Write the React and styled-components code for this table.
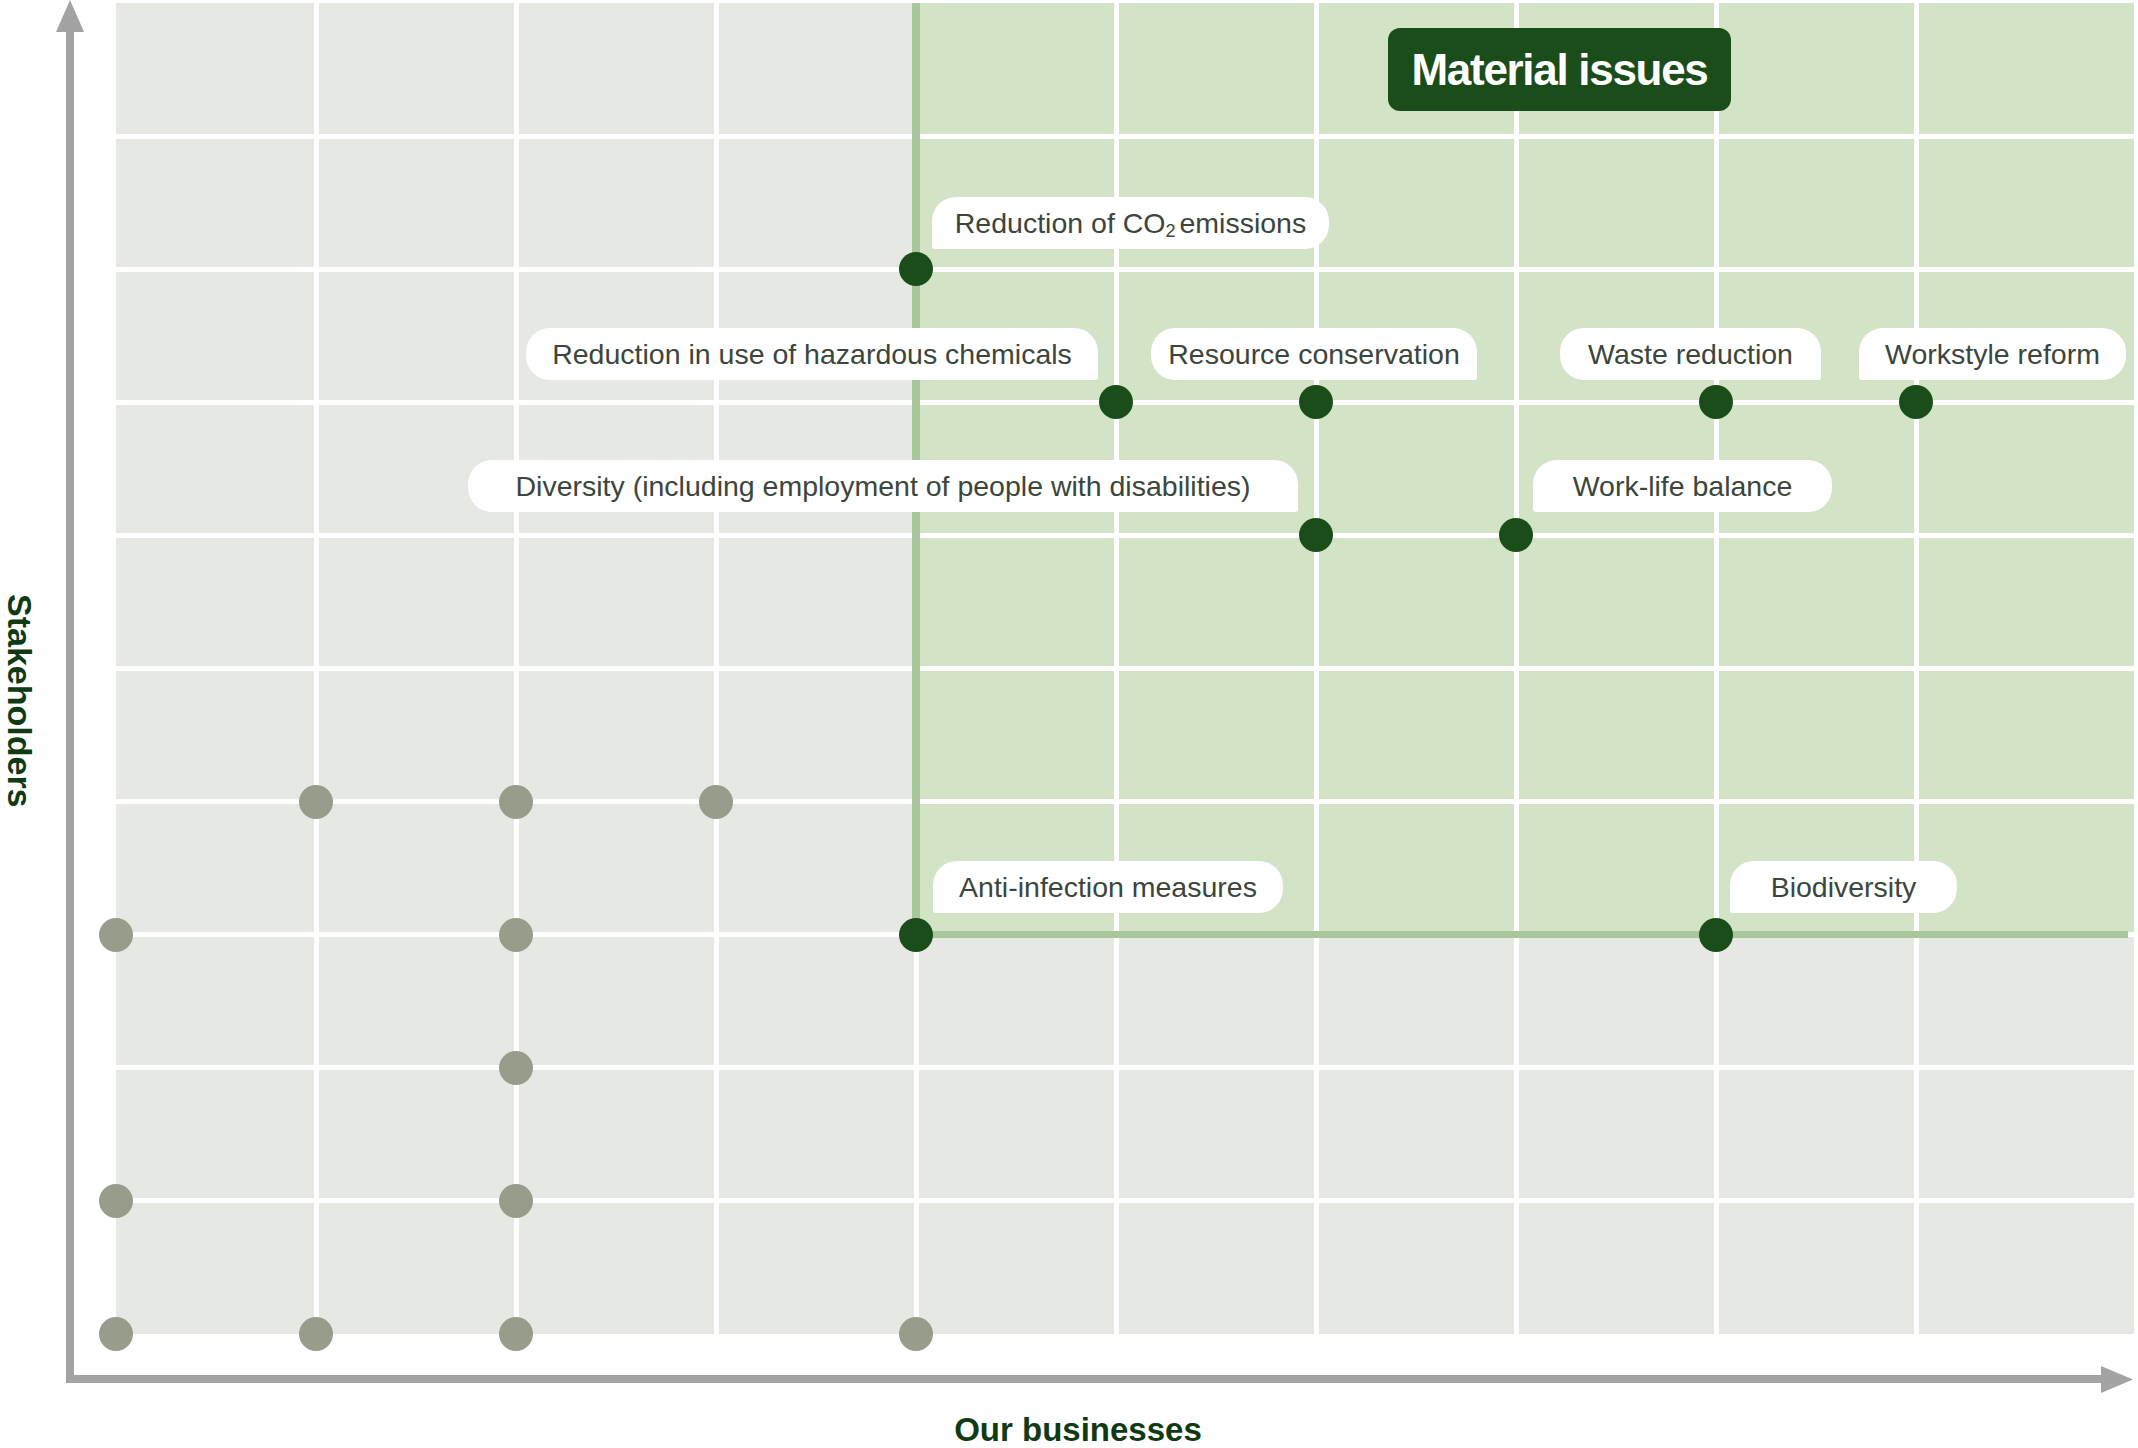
import React from "react";
import styled, { createGlobalStyle } from "styled-components";

const GlobalStyle = createGlobalStyle`
  html, body {
    margin: 0;
    padding: 0;
    background: #ffffff;
    overflow: hidden;
  }
  body {
    font-family: "Liberation Sans", Arial, sans-serif;
  }
`;

const COL = 200;
const ROW = 133.1;

const Page = styled.div`
  width: 2138px;
  height: 1448px;
  display: grid;
  grid-template-columns: 66px 8px 1fr;
  grid-template-rows: 1375px 8px auto;
  overflow: hidden;
`;

const YLabel = styled.div`
  grid-column: 1;
  grid-row: 1;
  align-self: center;
  justify-self: start;
  padding: 27px 0 0 2px;
  writing-mode: vertical-rl;
  font-size: 34px;
  line-height: 36px;
  font-weight: 700;
  color: #0f3a14;
`;

const YAxis = styled.div`
  grid-column: 2;
  grid-row: 1;
  display: flex;
  flex-direction: column;
  align-items: center;
`;

const AxisLine = styled.div`
  flex: 1;
  background: #a3a3a3;
  ${(p) => (p.$vertical ? "width: 8px;" : "height: 8px;")}
`;

const ArrowUp = styled.svg`
  flex: none;
  width: 28px;
  height: 32px;
  margin: 0 -10px;
  display: block;
`;

const ArrowRight = styled.svg`
  flex: none;
  width: 32px;
  height: 27px;
  margin: -9.5px 0;
  display: block;
`;

const XAxis = styled.div`
  grid-column: 2 / 4;
  grid-row: 2;
  display: flex;
  align-items: center;
  padding-right: 5px;
`;

const XLabel = styled.div`
  grid-column: 1 / 4;
  grid-row: 3;
  text-align: center;
  padding-left: 18px;
  margin-top: 27px;
  font-size: 33px;
  line-height: 40px;
  font-weight: 700;
  color: #0f3a14;
`;

const PlotArea = styled.div`
  grid-column: 3;
  grid-row: 1;
  padding: 3px 4px 41px 42px;
`;

const Plot = styled.div`
  position: relative;
  height: 100%;
`;

const CellGrid = styled.div`
  display: grid;
  grid-template-columns: 197.5px repeat(8, 195px) 1fr;
  grid-template-rows: 130.6px repeat(8, 128.1px) 130.6px;
  gap: 5px;
  height: 100%;
`;

const Cell = styled.div`
  background: ${(p) => (p.$material ? "#d2e4c5" : "#e6e8e3")};
`;

const Boundary = styled.div`
  position: absolute;
  background: #a8c79a;
  ${(p) =>
    p.$vertical
      ? `left: ${4 * COL - 4}px; top: 0; width: 8px; height: ${7 * ROW + 3}px;`
      : `left: ${4 * COL}px; top: ${7 * ROW - 3.5}px; height: 7px; width: 1212px;`}
`;

const Dot = styled.div`
  position: absolute;
  width: 34px;
  height: 34px;
  margin: -17px 0 0 -17px;
  border-radius: 50%;
  background: ${(p) => (p.$material ? "#1b4d1a" : "#979d8a")};
`;

const Bubble = styled.div`
  position: absolute;
  height: 52px;
  box-sizing: border-box;
  background: #ffffff;
  border-radius: ${(p) =>
    p.$sharp === "bl" ? "24px 24px 24px 3px" : "24px 24px 3px 24px"};
  font-size: 28.5px;
  line-height: 52px;
  text-align: center;
  white-space: nowrap;
  color: #3b463c;
`;

const Sub = styled.sub`
  font-size: 18px;
  line-height: 0;
  vertical-align: -4px;
  margin-right: 4px;
`;

const Badge = styled.div`
  position: absolute;
  left: 1272px;
  top: 25px;
  width: 343px;
  height: 83px;
  border-radius: 12px;
  background: #1b4d1a;
  color: #ffffff;
  display: flex;
  align-items: center;
  justify-content: center;
  font-size: 44px;
  font-weight: 700;
  letter-spacing: -1.3px;
`;

// [column line, row line, material?]
const dots = [
  [4, 2, true],
  [5, 3, true],
  [6, 3, true],
  [8, 3, true],
  [9, 3, true],
  [6, 4, true],
  [7, 4, true],
  [4, 7, true],
  [8, 7, true],
  [1, 6, false],
  [2, 6, false],
  [3, 6, false],
  [0, 7, false],
  [2, 7, false],
  [2, 8, false],
  [0, 9, false],
  [2, 9, false],
  [0, 10, false],
  [1, 10, false],
  [2, 10, false],
  [4, 10, false],
];

const labels = [
  { text: "co2", left: 816, top: 194, width: 397, sharp: "bl" },
  { text: "Reduction in use of hazardous chemicals", left: 410, top: 325, width: 572, sharp: "br" },
  { text: "Resource conservation", left: 1035, top: 325, width: 326, sharp: "br" },
  { text: "Waste reduction", left: 1444, top: 325, width: 261, sharp: "br" },
  { text: "Workstyle reform", left: 1743, top: 325, width: 267, sharp: "bl" },
  { text: "Diversity (including employment of people with disabilities)", left: 352, top: 457, width: 830, sharp: "br" },
  { text: "Work-life balance", left: 1417, top: 457, width: 299, sharp: "bl" },
  { text: "Anti-infection measures", left: 817, top: 858, width: 350, sharp: "bl" },
  { text: "Biodiversity", left: 1614, top: 858, width: 227, sharp: "bl" },
];

const cells = [];
for (let r = 0; r < 10; r++) {
  for (let c = 0; c < 10; c++) {
    cells.push({ key: `${r}-${c}`, material: c >= 4 && r < 7 });
  }
}

export default function App() {
  return (
    <>
      <GlobalStyle />
      <Page>
        <YLabel>Stakeholders</YLabel>
        <YAxis>
          <ArrowUp viewBox="0 0 28 32">
            <polygon points="14,0 28,32 0,32" fill="#a3a3a3" />
          </ArrowUp>
          <AxisLine $vertical />
        </YAxis>
        <PlotArea>
          <Plot>
            <CellGrid>
              {cells.map((c) => (
                <Cell key={c.key} $material={c.material} />
              ))}
            </CellGrid>
            <Boundary $vertical />
            <Boundary />
            <Badge>Material issues</Badge>
            {labels.map((l) => (
              <Bubble
                key={l.text}
                $sharp={l.sharp}
                style={{ left: l.left, top: l.top, width: l.width }}
              >
                {l.text === "co2" ? (
                  <>
                    Reduction of CO<Sub>2</Sub>emissions
                  </>
                ) : (
                  l.text
                )}
              </Bubble>
            ))}
            {dots.map(([i, j, m]) => (
              <Dot
                key={`${i}-${j}`}
                $material={m}
                style={{ left: i * COL, top: j * ROW }}
              />
            ))}
          </Plot>
        </PlotArea>
        <XAxis>
          <AxisLine />
          <ArrowRight viewBox="0 0 32 27">
            <polygon points="0,0 32,13.5 0,27" fill="#a3a3a3" />
          </ArrowRight>
        </XAxis>
        <XLabel>Our businesses</XLabel>
      </Page>
    </>
  );
}
